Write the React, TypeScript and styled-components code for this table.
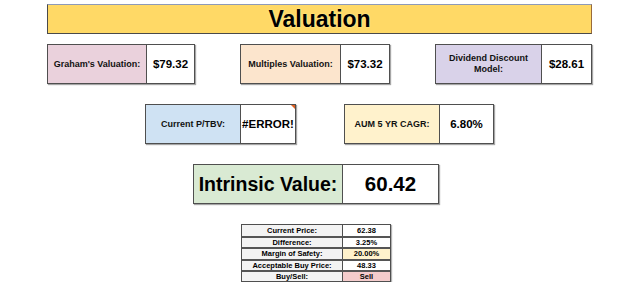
import styled, { createGlobalStyle } from 'styled-components';

const GlobalStyle = createGlobalStyle`
  html, body {
    margin: 0;
    padding: 0;
    background: #ffffff;
  }
  body {
    font-family: 'Liberation Sans', Arial, sans-serif;
    color: #000000;
  }
`;

type Metric = {
  label: string;
  value: string;
  tint: string;
  labelW: number;
  valueW: number;
  error?: boolean;
};

const topRow: Metric[] = [
  { label: "Graham's Valuation:", value: '$79.32', tint: '#ead1dc', labelW: 99, valueW: 47 },
  { label: 'Multiples Valuation:', value: '$73.32', tint: '#fce5cd', labelW: 100, valueW: 48 },
  { label: 'Dividend Discount Model:', value: '$28.61', tint: '#d9d2e9', labelW: 106, valueW: 49 },
];

const middleRow: Metric[] = [
  { label: 'Current P/TBV:', value: '#ERROR!', tint: '#cfe2f3', labelW: 95, valueW: 54, error: true },
  { label: 'AUM 5 YR CAGR:', value: '6.80%', tint: '#fff2cc', labelW: 95, valueW: 53 },
];

const priceRows = [
  { label: 'Current Price:', value: '62.38', fill: '#ffffff' },
  { label: 'Difference:', value: '3.25%', fill: '#ffffff' },
  { label: 'Margin of Safety:', value: '20.00%', fill: '#fff2cc' },
  { label: 'Acceptable Buy Price:', value: '48.33', fill: '#ffffff' },
];

function MetricBox({ metric }: { metric: Metric }) {
  return (
    <Box $labelW={metric.labelW} $valueW={metric.valueW}>
      <LabelCell $tint={metric.tint}>{metric.label}</LabelCell>
      <ValueCell>
        {metric.value}
        {metric.error && <ErrorFlag />}
      </ValueCell>
    </Box>
  );
}

function App() {
  return (
    <>
      <GlobalStyle />
      <Page>
        <TitleBar>Valuation</TitleBar>
        <Sections>
          <SpreadRow>
            {topRow.map((m) => (
              <MetricBox key={m.label} metric={m} />
            ))}
          </SpreadRow>

          <IndentRow $indent={98}>
            {middleRow.map((m) => (
              <MetricBox key={m.label} metric={m} />
            ))}
          </IndentRow>

          <IndentRow $indent={146}>
            <BigBox>
              <BigLabel>Intrinsic Value:</BigLabel>
              <BigValue>60.42</BigValue>
            </BigBox>
          </IndentRow>

          <IndentRow $indent={194}>
            <PriceTable>
              {priceRows.map((r) => (
                <PriceRow key={r.label}>
                  <PriceLabel>{r.label}</PriceLabel>
                  <PriceValue $fill={r.fill}>{r.value}</PriceValue>
                </PriceRow>
              ))}
              <PriceRow $split>
                <PriceLabel>Buy/Sell:</PriceLabel>
                <PriceValue $fill='#f4cccc'>Sell</PriceValue>
              </PriceRow>
            </PriceTable>
          </IndentRow>
        </Sections>
      </Page>
    </>
  );
}

export default App;

const Page = styled.div`
  width: 545px;
  margin-left: 47px;
  padding-top: 4px;
`;

const TitleBar = styled.div`
  box-sizing: border-box;
  height: 30px;
  display: flex;
  align-items: center;
  justify-content: center;
  background: #ffd966;
  border: 1px solid #4a4a4a;
  border-top-color: #8d9ab8;
  border-right-color: #9a6b3a;
  font-size: 23px;
  font-weight: 700;
  text-shadow: 0 0 2px #fff5a0;
`;

const Sections = styled.div`
  display: flex;
  flex-direction: column;
  gap: 20px;
  margin-top: 10px;
`;

const SpreadRow = styled.div`
  display: flex;
  justify-content: space-between;
`;

const IndentRow = styled.div<{ $indent: number }>`
  display: flex;
  gap: 48px;
  padding-left: ${({ $indent }) => $indent}px;
`;

const Box = styled.div<{ $labelW: number; $valueW: number }>`
  box-sizing: border-box;
  height: 40px;
  display: grid;
  grid-template-columns: ${({ $labelW, $valueW }) => `${$labelW}px ${$valueW}px`};
  border: 1px solid #4f4f4f;
  box-shadow: 1px 1px 1px rgba(0, 0, 0, 0.35);
`;

const LabelCell = styled.div<{ $tint: string }>`
  display: flex;
  align-items: center;
  justify-content: center;
  text-align: center;
  padding: 0 3px;
  background: ${({ $tint }) => $tint};
  border-right: 1px solid #4f4f4f;
  font-size: 9px;
  font-weight: 700;
  line-height: 11px;
  color: #111111;
`;

const ValueCell = styled.div`
  position: relative;
  display: flex;
  align-items: center;
  justify-content: center;
  background: #ffffff;
  font-size: 11.5px;
  font-weight: 700;
  white-space: nowrap;
`;

const ErrorFlag = styled.span`
  position: absolute;
  top: 0;
  right: 0;
  width: 0;
  height: 0;
  border-top: 4px solid #e06020;
  border-left: 4px solid transparent;
`;

const BigBox = styled.div`
  box-sizing: border-box;
  height: 40px;
  display: grid;
  grid-template-columns: 149px 95px;
  border: 1px solid #4f4f4f;
  box-shadow: 1px 1px 1px rgba(0, 0, 0, 0.35);
`;

const BigLabel = styled.div`
  display: flex;
  align-items: center;
  justify-content: center;
  background: #d9ead3;
  border-right: 1px solid #4f4f4f;
  font-size: 19.5px;
  font-weight: 700;
  white-space: nowrap;
`;

const BigValue = styled.div`
  display: flex;
  align-items: center;
  justify-content: center;
  background: #ffffff;
  font-size: 20.5px;
  font-weight: 700;
`;

const PriceTable = styled.div`
  width: 148px;
  display: flex;
  flex-direction: column;
  border: 1px solid #4f4f4f;
  box-shadow: 1px 1px 1px rgba(0, 0, 0, 0.3);
`;

const PriceRow = styled.div<{ $split?: boolean }>`
  box-sizing: border-box;
  height: 11.2px;
  display: grid;
  grid-template-columns: 101px 47px;
  & + & {
    border-top: ${({ $split }) => ($split ? '2px solid #555555' : '1px solid #9a9a9a')};
  }
`;

const PriceLabel = styled.div`
  display: flex;
  align-items: center;
  justify-content: center;
  background: #f3f3f3;
  border-right: 1px solid #4f4f4f;
  font-size: 7.5px;
  font-weight: 700;
  white-space: nowrap;
`;

const PriceValue = styled.div<{ $fill: string }>`
  display: flex;
  align-items: center;
  justify-content: center;
  background: ${({ $fill }) => $fill};
  font-size: 7.5px;
  font-weight: 700;
`;
